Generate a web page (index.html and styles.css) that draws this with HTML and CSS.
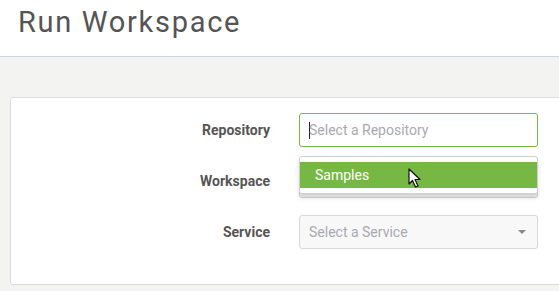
FILE: index.html
```html
<!DOCTYPE html>
<html lang="en">
<head>
    <meta charset="UTF-8">
    <title>Run Workspace</title>
    <link rel="stylesheet" href="styles.css">
</head>
<body>
    <header class="page-header">
        <h1>Run Workspace</h1>
    </header>

    <main class="content">
        <div class="card">
            <form class="run-form">
                <label class="field-label" for="repo">Repository</label>
                <div class="control">
                    <div class="combo active">
                        <span class="caret-line"></span>
                        <span class="placeholder">Select a Repository</span>
                    </div>
                    <!-- open dropdown -->
                    <ul class="dropdown">
                        <li class="highlighted">Samples</li>
                    </ul>
                    <svg class="pointer" width="14" height="21" viewBox="0 0 14 21">
                        <path d="M1 1 L1 16 L4.5 12.5 L7.5 19 L10 18 L7 11.5 L12 11.5 Z" fill="#fff" stroke="#111" stroke-width="1.2" stroke-linejoin="round"/>
                    </svg>
                </div>

                <label class="field-label">Workspace</label>
                <div class="control">
                    <!-- covered by the open dropdown -->
                    <div class="combo disabled">
                        <span class="placeholder"></span>
                        <span class="arrow"></span>
                    </div>
                </div>

                <label class="field-label">Service</label>
                <div class="control">
                    <div class="combo disabled">
                        <span class="placeholder">Select a Service</span>
                        <span class="arrow"></span>
                    </div>
                </div>
            </form>
        </div>
    </main>
</body>
</html>
```

FILE: styles.css
```css
body {
    margin: 0;
    font-family: Roboto, 'Liberation Sans', Arial, sans-serif;
    background: #f3f3f2;
    overflow: hidden;
}
.page-header {
    background: #fff;
    height: 56px;
    border-bottom: 1px solid #c9d6e3;
    padding-left: 18px;
}
.page-header h1 {
    margin: 0;
    padding-top: 5px;
    font-size: 29px;
    font-weight: 400;
    letter-spacing: 1.7px;
    color: #545454;
    line-height: 34px;
}
.content {
    padding: 40px 0 0 10px;
}
.card {
    width: 600px;
    background: #fff;
    border: 1px solid #dcdcdc;
    border-radius: 3px;
    padding: 15px 0 35px;
}
.run-form {
    display: grid;
    grid-template-columns: 259px 239px;
    column-gap: 29px;
    row-gap: 17px;
    align-items: center;
}
.field-label {
    text-align: right;
    font-size: 14px;
    font-weight: 700;
    color: #575454;
}
.control {
    position: relative;
}
.combo {
    height: 32px;
    border: 1px solid #d9d9d9;
    border-radius: 3px;
    display: flex;
    align-items: center;
    padding: 0 9px;
    font-size: 14px;
}
.combo.active {
    border-color: #7ab648;
    background: #fff;
}
.combo.disabled {
    background: #f8f8f8;
}
.placeholder {
    color: #a9a9b0;
    flex: 1;
}
.caret-line {
    width: 1px;
    height: 17px;
    background: #222;
    margin-right: -1px;
}
.arrow {
    width: 0;
    height: 0;
    border-left: 4px solid transparent;
    border-right: 4px solid transparent;
    border-top: 4px solid #888;
    margin-right: 2px;
}
.dropdown {
    position: absolute;
    top: 43px;
    left: 0;
    right: 0;
    margin: 0;
    padding: 5px 0 5px;
    list-style: none;
    background: #fff;
    border: 1px solid #cfcfcf;
    border-radius: 3px;
    box-shadow: 0 4px 4px rgba(0, 0, 0, 0.15);
    z-index: 2;
}
.dropdown li {
    height: 26px;
    line-height: 26px;
    padding-left: 15px;
    font-size: 14px;
    color: #fff;
}
.dropdown li.highlighted {
    background: #76b843;
}
.pointer {
    position: absolute;
    left: 109px;
    top: 55px;
    z-index: 3;
}
```
